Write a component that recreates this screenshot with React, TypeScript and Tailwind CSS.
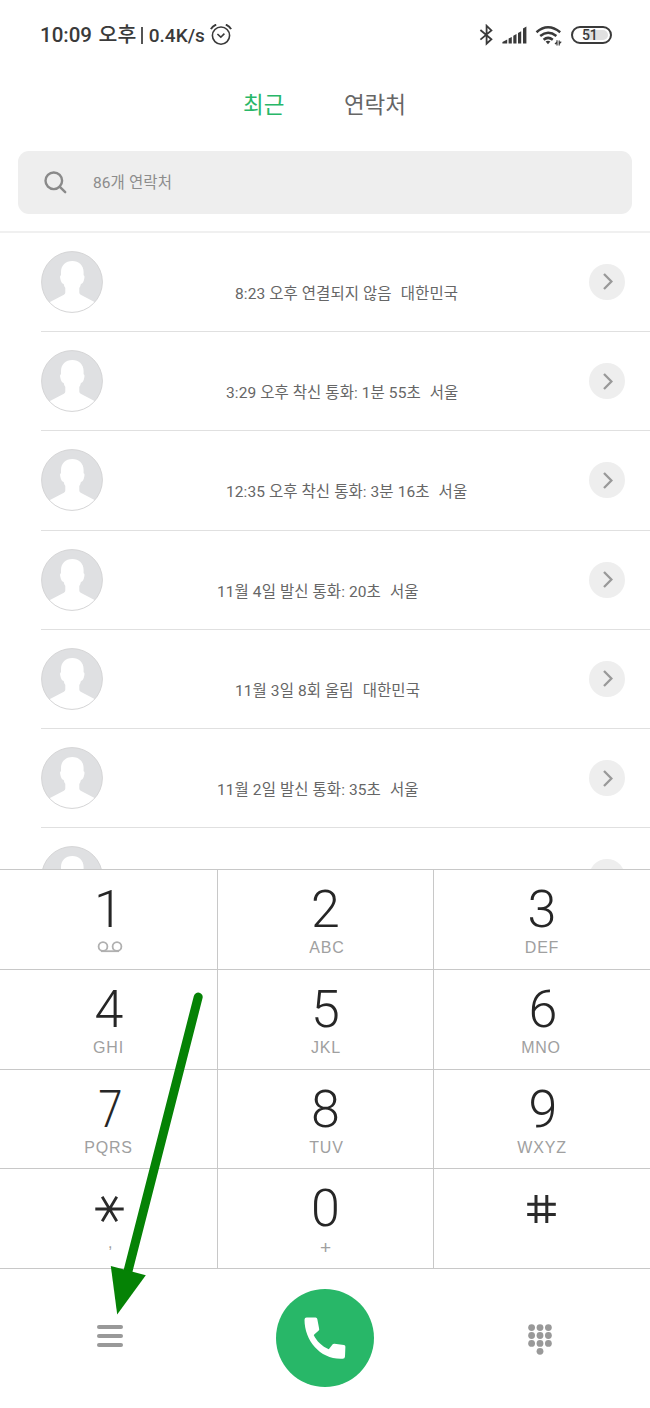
import { ReactNode } from 'react'

interface Call {
  text: string
  place: string
  indent: string
}

interface Key {
  digit: ReactNode
  sub?: ReactNode
  digitShift?: string
  subShift?: string
}

const calls: Call[] = [
  { text: '8:23 오후 연결되지 않음', place: '대한민국', indent: 'ml-[132px]' },
  { text: '3:29 오후 착신 통화: 1분 55초', place: '서울', indent: 'ml-[123px]' },
  { text: '12:35 오후 착신 통화: 3분 16초', place: '서울', indent: 'ml-[123px]' },
  { text: '11월 4일 발신 통화: 20초', place: '서울', indent: 'ml-[114px]' },
  { text: '11월 3일 8회 울림', place: '대한민국', indent: 'ml-[132px]' },
  { text: '11월 2일 발신 통화: 35초', place: '서울', indent: 'ml-[114px]' },
  { text: '', place: '', indent: '' },
]

const Voicemail = () => (
  <svg className="-mt-[3px] h-[12px] w-[26px]" viewBox="0 0 26 12" fill="none" stroke="#b0b0b0" strokeWidth="1.8">
    <circle cx="6" cy="5.5" r="4.4" />
    <circle cx="20" cy="5.5" r="4.4" />
    <path d="M4 10.2h18" />
  </svg>
)

const Star = () => (
  <svg className="h-[28px] w-[29px]" viewBox="0 0 29 28" stroke="#2a2a2a" strokeWidth="2.8">
    <path d="M.3 14h28.4M7.2 1.8l14.6 24.4M21.8 1.8L7.2 26.2" />
  </svg>
)

const Hash = () => (
  <svg className="h-[28px] w-[29px]" viewBox="0 0 29 28" stroke="#2a2a2a" strokeWidth="3">
    <path d="M.2 9.2h28.6M.2 19.4h28.6M9 0v28M19.8 0v28" />
  </svg>
)

const keys: Key[] = [
  { digit: '1', sub: <Voicemail />, subShift: 'ml-[2px]' },
  { digit: '2', sub: 'ABC', subShift: 'ml-[3px]' },
  { digit: '3', sub: 'DEF' },
  { digit: '4', sub: 'GHI', digitShift: 'ml-[1px]' },
  { digit: '5', sub: 'JKL', subShift: 'ml-[1px]' },
  { digit: '6', sub: 'MNO', digitShift: 'ml-[2px]', subShift: '-ml-[2px]' },
  { digit: '7', sub: 'PQRS', digitShift: 'ml-[4px] scale-x-[.84]' },
  { digit: '8', sub: 'TUV', subShift: 'ml-[2px]' },
  { digit: '9', sub: 'WXYZ', digitShift: 'ml-[2px]' },
  { digit: <Star />, sub: ',', digitShift: 'ml-[2px]', subShift: 'ml-[4px] -mt-[4px]' },
  { digit: '0', sub: <span className="mt-[2px] text-[19px] leading-[16px]">+</span>, subShift: 'ml-[1px]' },
  { digit: <Hash />, digitShift: '-ml-[2px]' },
]

const StatusBar = () => (
  <div className="flex h-[70px] items-center pl-[40px] pr-[38px] text-[#3a3a3a]">
    <span className="text-[20.5px] font-medium leading-none">10:09</span>
    <span className="ml-[6.5px] text-[20.5px] font-medium leading-none">오후</span>
    <span className="ml-[5px] h-[17px] w-[1.5px] bg-[#555]" />
    <span className="ml-[6px] text-[19px] font-medium leading-none">0.4K/s</span>
    <svg className="ml-[5px] h-[22px] w-[22px]" viewBox="0 0 22 22" fill="none" stroke="#3a3a3a" strokeWidth="1.6">
      <circle cx="11" cy="11.6" r="8.6" />
      <path d="M7.4 10l3.4 3.2 3.6-3.6" />
      <path d="M.9 5.2Q2.5 2 6.2.6M21.1 5.2Q19.5 2 15.8.6" strokeWidth="1.9" />
    </svg>
    <div className="ml-auto flex items-center">
      <svg className="h-[22px] w-[14px]" viewBox="0 0 14 22" fill="none" stroke="#3a3a3a" strokeWidth="1.8">
        <path d="M1.4 6l11 9.2-4.8 4.4V1.8l4.8 4.6-11 9.2" />
      </svg>
      <svg className="ml-[9px] h-[18px] w-[26px]" viewBox="0 0 26 18" fill="#3a3a3a">
        <path d="M.4 17.5V16l4.8-2.4v3.9zM6.6 17.5v-5l3.2-1.4v6.4zM11.3 17.5V9.8l3.2-1.7v9.4zM16 17.5V7l3.2-1.8v12.3zM21 17.5V2.6L24.4.5v17z" />
      </svg>
      <svg className="ml-[7px] h-[21px] w-[27px]" viewBox="0 0 27 21" fill="none" stroke="#3a3a3a">
        <path d="M1.500 7.200Q12.800-2.600 25.200 7.200" strokeWidth="2.5" />
        <path d="M5.200 11Q13 4.600 21.400 11M8.600 14.700Q13 11 17.800 14.700" strokeWidth="2.5" />
        <path d="M10.600 16.600q2.400-1.900 4.800 0l-2.400 2.600z" fill="#3a3a3a" stroke="none" />
        <path d="M22 15.2v5.200M20 19.2l2-2.200M24.2 20.600v-5.200M26.200 16.600l-2 2.200" strokeWidth="1.2" />
      </svg>
      <div className="ml-[9px] flex h-[18.5px] w-[41px] items-center justify-end rounded-full border-2 border-[#3a3a3a] p-[2px]">
        <div className="relative h-full w-[22px] rounded-r-full bg-[#e0e0e0]">
          <span className="absolute -left-[4px] top-1/2 -translate-y-1/2 text-[14px] font-medium leading-none tracking-[-0.3px]">51</span>
        </div>
      </div>
    </div>
  </div>
)

const Avatar = () => (
  <svg className="ml-[41px] h-[62px] w-[62px] shrink-0" viewBox="0 0 62 62">
    <circle cx="31" cy="31" r="30.4" fill="#dfe0e2" />
    <path
      d="M31.3 10C24.5 10 20 14.5 20 21v3.3c-1.200.2-1 2-.6 3.700.6 2.800 1.600 4.600 3.300 5 .3 1.700.8 3 1.600 4v4.500q0 1.400-1.400 2.200L8 51.500C14 58 22 61.400 31 61.400S48.500 58 54.500 51.500L39.700 43.700q-1.400-.8-1.400-2.200V37c.8-1 1.300-2.300 1.600-4 1.700-.4 2.700-2.200 3.300-5 .4-1.700.6-3.500-.6-3.700V21C42.600 14.500 38 10 31.300 10z"
      fill="#fff"
    />
    <circle cx="31" cy="31" r="30.4" fill="none" stroke="#d5d5d6" strokeWidth="1" />
  </svg>
)

const CallRow = ({ text, place, indent }: Call) => (
  <div className="relative flex h-[99.25px] shrink-0 items-start pt-[18px]">
    <Avatar />
    <div className={`${indent} mt-[32px] flex gap-[9px] whitespace-pre text-[15.5px] leading-[22px] tracking-[0.08px] text-[#666]`}>
      <span>{text}</span>
      <span>{place}</span>
    </div>
    <div className="ml-auto mr-[25px] mt-[13px] flex h-[36px] w-[36px] items-center justify-center rounded-full bg-[#eee]">
      <svg className="ml-[2px] h-[17px] w-[10px]" viewBox="0 0 10 17" fill="none" stroke="#999" strokeWidth="2.3">
        <path d="M1 1l7.4 7.5L1 16" />
      </svg>
    </div>
    <div className="absolute bottom-0 left-[41px] right-0 h-px bg-[#e0e0e0]" />
  </div>
)

const KeyCell = ({ digit, sub, digitShift = '', subShift = '' }: Key) => (
  <div className="flex flex-col items-center border-b border-r border-[#c8c8c8]">
    <div className={`${digitShift} mt-[10px] flex h-[60px] items-center text-[52px] font-light leading-[60px] text-[#262626]`}>
      {digit}
    </div>
    <div className={`${subShift} flex h-[16px] items-center font-['Liberation_Sans'] text-[16px] leading-[16px] tracking-[0.8px] text-[#a0a0a0]`}>
      {sub}
    </div>
  </div>
)

const dots = [[0, 0], [1, 0], [2, 0], [0, 1], [1, 1], [2, 1], [0, 2], [1, 2], [2, 2], [1, 3]]

const App = () => {
  return (
    <div className="relative flex h-[1408px] w-[650px] flex-col overflow-hidden bg-white font-['Roboto','Noto_Sans_CJK_KR',sans-serif]">
      <StatusBar />

      {/* Tabs */}
      <div className="flex h-[70px] items-center pl-[243px] text-[22.5px] leading-none">
        <span className="text-[#28b768]">최근</span>
        <span className="ml-[59.5px] text-[#666]">연락처</span>
      </div>

      {/* Search */}
      <div className="mx-[18px] mt-[10.5px] flex h-[63.5px] shrink-0 items-center rounded-[11px] bg-[#eee] pl-[26px]">
        <svg className="mt-[2px] h-[24px] w-[24px]" viewBox="0 0 24 24" fill="none" stroke="#8a8a8a" strokeWidth="2.4">
          <circle cx="9.8" cy="9.8" r="8.3" />
          <path d="M15.6 15.6l5.600 5.600" strokeLinecap="round" />
        </svg>
        <span className="ml-[25px] mt-[2px] text-[15.5px] tracking-[0.1px] text-[#8c8c8c]">86개 연락처</span>
      </div>

      {/* Call log */}
      <div className="mt-[16.75px] flex h-[638.25px] shrink-0 flex-col overflow-hidden border-t-2 border-[#f0f0f0]">
        {calls.map((call, i) => (
          <CallRow key={i} {...call} />
        ))}
      </div>

      {/* Dialpad */}
      <div className="grid h-[400px] w-[651px] shrink-0 grid-cols-[218px_216px_217px] grid-rows-4 border-t border-[#c8c8c8]">
        {keys.map((key, i) => (
          <KeyCell key={i} {...key} />
        ))}
      </div>

      {/* Bottom actions */}
      <div className="flex h-[137px] shrink-0 items-center">
        <div className="flex w-[217px] justify-center">
          <div className="mb-[3px] ml-[3px] flex w-[26px] flex-col gap-[5px]">
            <span className="h-[4px] rounded-full bg-[#999]" />
            <span className="h-[4px] rounded-full bg-[#999]" />
            <span className="h-[4px] rounded-full bg-[#999]" />
          </div>
        </div>
        <div className="flex w-[216px] justify-center">
          <div className="flex h-[98px] w-[98px] items-center justify-center rounded-full bg-[#28b768]">
            <svg className="h-[42px] w-[42px]" viewBox="0 0 42 42" fill="#fff">
              <path d="M2.6.5h9q1.4 0 1.7 1.5l1.9 10q.1.9-.5 1.5l-5 4.5C12.500 24 18 29.500 24.800 32.200l3.900-4.900q.7-.8 1.800-.6l9.400 1.300q1.500.2 1.500 1.800l-.4 9.700q-.1 2.200-2.300 2.200C17 43 .5 24 .5 2.700Q.5.5 2.6.5z" />
            </svg>
          </div>
        </div>
        <div className="flex w-[217px] justify-center">
          <svg className="-ml-[4px] mt-[3px] h-[31px] w-[24px]" viewBox="0 0 24 31" fill="#999">
            {dots.map(([col, row]) => (
              <circle key={`${col}-${row}`} cx={3.6 + col * 8.4} cy={3.6 + row * 7.9} r="3.4" />
            ))}
          </svg>
        </div>
      </div>

      {/* Arrow pointing at the menu button */}
      <svg className="absolute left-[105px] top-[985px] h-[335px] w-[105px]" viewBox="105 985 105 335">
        <path d="M198.2 997L127 1275" stroke="#058205" strokeWidth="9" strokeLinecap="round" />
        <path d="M110.8 1266l35 9.200-28.600 39.300z" fill="#058205" />
      </svg>
    </div>
  )
}

export default App
